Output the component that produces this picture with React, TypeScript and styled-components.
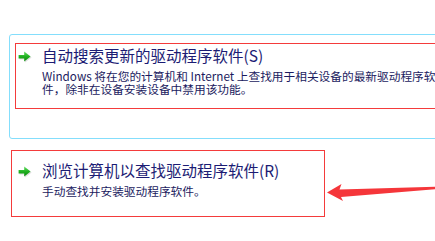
import React from "react";
import styled, { createGlobalStyle } from "styled-components";

const Global = createGlobalStyle`
  html, body { margin: 0; padding: 0; background: #ffffff; overflow: hidden; }
  body { width: 435px; height: 241px; font-family: "Noto Sans CJK SC", "Noto Sans", sans-serif; }
`;

const Page = styled.div`
  position: relative;
  width: 435px;
  height: 241px;
  overflow: hidden;
  box-sizing: border-box;
  padding: 34px 0 0 9px;
`;

const Highlight = styled.div`
  box-sizing: border-box;
  width: 700px;
  height: 105px;
  border: 1px solid #84defc;
  border-radius: 3px;
  padding: 8px 0 0 5px;
`;

const Frame = styled.div<{ $top: number; $left: number; $width: number; $height: number; $mt?: number; $ml?: number }>`
  box-sizing: border-box;
  width: ${(p) => p.$width}px;
  height: ${(p) => p.$height}px;
  margin: ${(p) => p.$mt ?? 0}px 0 0 ${(p) => p.$ml ?? 0}px;
  border: 1px solid #f43b3b;
  padding: ${(p) => p.$top}px 0 0 ${(p) => p.$left}px;
`;

const Option = styled.div`
  display: flex;
  align-items: flex-start;
  gap: 10px;
`;

const IconBox = styled.div`
  flex: none;
  width: 14px;
  height: 12px;
  margin-top: 6px;
  display: flex;
`;

const TextCol = styled.div`
  display: flex;
  flex-direction: column;
`;

const Title = styled.div`
  font-size: 15.5px;
  line-height: 20px;
  color: #1c1c74;
  white-space: nowrap;
`;

const Desc = styled.div`
  margin-top: 3.5px;
  font-size: 11.7px;
  line-height: 13px;
  color: #1b1b60;
  white-space: nowrap;
`;

const Overlay = styled.svg`
  position: absolute;
  left: 0;
  top: 0;
  width: 435px;
  height: 241px;
  pointer-events: none;
`;

const GreenArrow: React.FC<{ id: string }> = ({ id }) => (
  <svg width="14" height="12" viewBox="0 0 14 12">
    <defs>
      <linearGradient id={id} x1="0" y1="0" x2="0" y2="1">
        <stop offset="0" stopColor="#6ce06c" />
        <stop offset="0.45" stopColor="#24b424" />
        <stop offset="1" stopColor="#0a880a" />
      </linearGradient>
    </defs>
    <path d="M1.6 5.4 H7 V2 L13.6 6.6 L7 11.4 V8.4 H1.6 Z" fill="#cfcfcf" opacity="0.7" />
    <path d="M0.6 4 H6.2 V0.6 L12.6 5.6 L6.2 10.6 V7.4 H0.6 Z" fill={`url(#${id})`} />
  </svg>
);

export default function App() {
  return (
    <>
      <Global />
      <Page>
        <Highlight>
          <Frame $top={1} $left={2} $width={640} $height={66}>
            <Option>
              <IconBox>
                <GreenArrow id="g1" />
              </IconBox>
              <TextCol>
                <Title>自动搜索更新的驱动程序软件(S)</Title>
                <Desc>
                  Windows 将在您的计算机和 Internet 上查找用于相关设备的最新驱动程序软
                  <br />
                  件，除非在设备安装设备中禁用该功能。
                </Desc>
              </TextCol>
            </Option>
          </Frame>
        </Highlight>
        <Frame $top={9} $left={6} $width={314} $height={67} $mt={11} $ml={2}>
          <Option>
            <IconBox>
              <GreenArrow id="g2" />
            </IconBox>
            <TextCol>
              <Title>浏览计算机以查找驱动程序软件(R)</Title>
              <Desc>手动查找并安装驱动程序软件。</Desc>
            </TextCol>
          </Option>
        </Frame>
        <Overlay viewBox="0 0 435 241">
          <path
            d="M327 192.5 L341.5 184 L339.5 189.5 L436 186.6 L436 189.2 L341 197 L343 201 Z"
            fill="#f5363a"
          />
        </Overlay>
      </Page>
    </>
  );
}
